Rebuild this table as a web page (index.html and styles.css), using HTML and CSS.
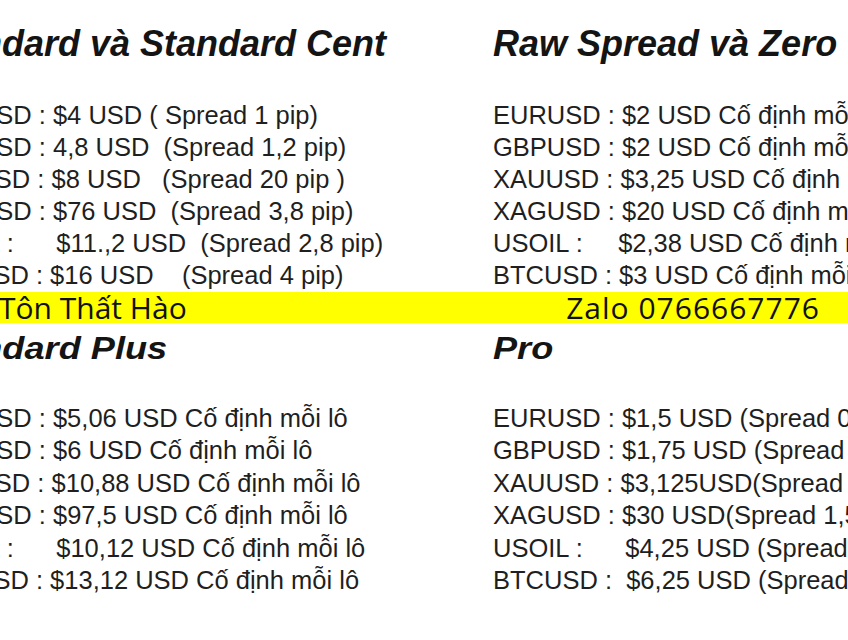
FILE: index.html
```html
<!DOCTYPE html>
<html lang="vi">
<head>
<meta charset="utf-8">
<title>Phí giao dịch</title>
<link rel="stylesheet" href="styles.css">
</head>
<body>
<main class="page">
  <section class="block block-top">
    <div class="col">
      <h2 class="title">Standard và Standard Cent</h2>
      <ul class="rows">
        <li>EURUSD : $4 USD ( Spread 1 pip)</li>
        <li>GBPUSD : 4,8 USD  (Spread 1,2 pip)</li>
        <li>XAUUSD : $8 USD   (Spread 20 pip )</li>
        <li>XAGUSD : $76 USD  (Spread 3,8 pip)</li>
        <li>USOIL :      $11.,2 USD  (Spread 2,8 pip)</li>
        <li>BTCUSD : $16 USD    (Spread 4 pip)</li>
      </ul>
    </div>
    <div class="col">
      <h2 class="title">Raw Spread và Zero</h2>
      <ul class="rows">
        <li>EURUSD : $2 USD Cố định mỗi lô</li>
        <li>GBPUSD : $2 USD Cố định mỗi lô</li>
        <li>XAUUSD : $3,25 USD Cố định mỗi lô</li>
        <li>XAGUSD : $20 USD Cố định mỗi lô</li>
        <li>USOIL :     $2,38 USD Cố định mỗi lô</li>
        <li>BTCUSD : $3 USD Cố định mỗi lô</li>
      </ul>
    </div>
  </section>

  <div class="band">
    <span class="band-name">Tôn Thất Hào</span>
    <span class="band-zalo">Zalo 0766667776</span>
  </div>

  <section class="block block-bottom">
    <div class="col">
      <h2 class="title title-sm"><span class="stretch">Standard Plus</span></h2>
      <ul class="rows rows-b">
        <li>EURUSD : $5,06 USD Cố định mỗi lô</li>
        <li>GBPUSD : $6 USD Cố định mỗi lô</li>
        <li>XAUUSD : $10,88 USD Cố định mỗi lô</li>
        <li>XAGUSD : $97,5 USD Cố định mỗi lô</li>
        <li>USOIL :      $10,12 USD Cố định mỗi lô</li>
        <li>BTCUSD : $13,12 USD Cố định mỗi lô</li>
      </ul>
    </div>
    <div class="col">
      <h2 class="title title-sm"><span class="stretch">Pro</span></h2>
      <ul class="rows rows-b">
        <li>EURUSD : $1,5 USD (Spread 0,6 pip)</li>
        <li>GBPUSD : $1,75 USD (Spread 0,7 pip)</li>
        <li>XAUUSD : $3,125USD(Spread 12,5 pip)</li>
        <li>XAGUSD : $30 USD(Spread 1,5 pip)</li>
        <li>USOIL :      $4,25 USD (Spread 3 pip)</li>
        <li>BTCUSD :  $6,25 USD (Spread 5 pip)</li>
      </ul>
    </div>
  </section>
</main>
</body>
</html>
```

FILE: styles.css
```css
html, body {
  margin: 0;
  padding: 0;
  background: #ffffff;
}

.page {
  width: 848px;
  height: 640px;
  overflow: hidden;
  background: #ffffff;
  color: #1b1b1b;
  font-family: "Liberation Sans", Arial, sans-serif;
}

.block {
  display: grid;
  grid-template-columns: 569px 460px;
  margin-left: -76px;
}

.block-top {
  padding-top: 24px;
}

.block-bottom {
  padding-top: 7px;
}

.col {
  min-width: 0;
}

.title {
  margin: 0;
  font-size: 36px;
  line-height: 40px;
  font-weight: bold;
  font-style: italic;
  color: #141414;
  white-space: nowrap;
}

.title-sm {
  font-size: 32px;
  line-height: 36px;
}

.stretch {
  display: inline-block;
  transform: scaleX(1.13);
  transform-origin: left center;
}

.rows {
  list-style: none;
  margin: 35px 0 0 0;
  padding: 0;
  font-size: 25.5px;
  line-height: 32px;
  color: #1f1f1f;
}

.rows li {
  white-space: pre;
}

.rows-b {
  margin-top: 35.5px;
  line-height: 32.6px;
}

.band {
  display: flex;
  align-items: center;
  height: 31px;
  margin-top: 1px;
  background: #ffff00;
  color: #111111;
  font-family: "Open Sans", "Noto Sans", sans-serif;
  font-size: 30px;
  line-height: 31px;
  overflow: hidden;
}

.band span {
  white-space: pre;
}

.band-name {
  margin-left: -1px;
}

.band-zalo {
  margin-left: auto;
  margin-right: 28px;
  letter-spacing: 1px;
}
```
